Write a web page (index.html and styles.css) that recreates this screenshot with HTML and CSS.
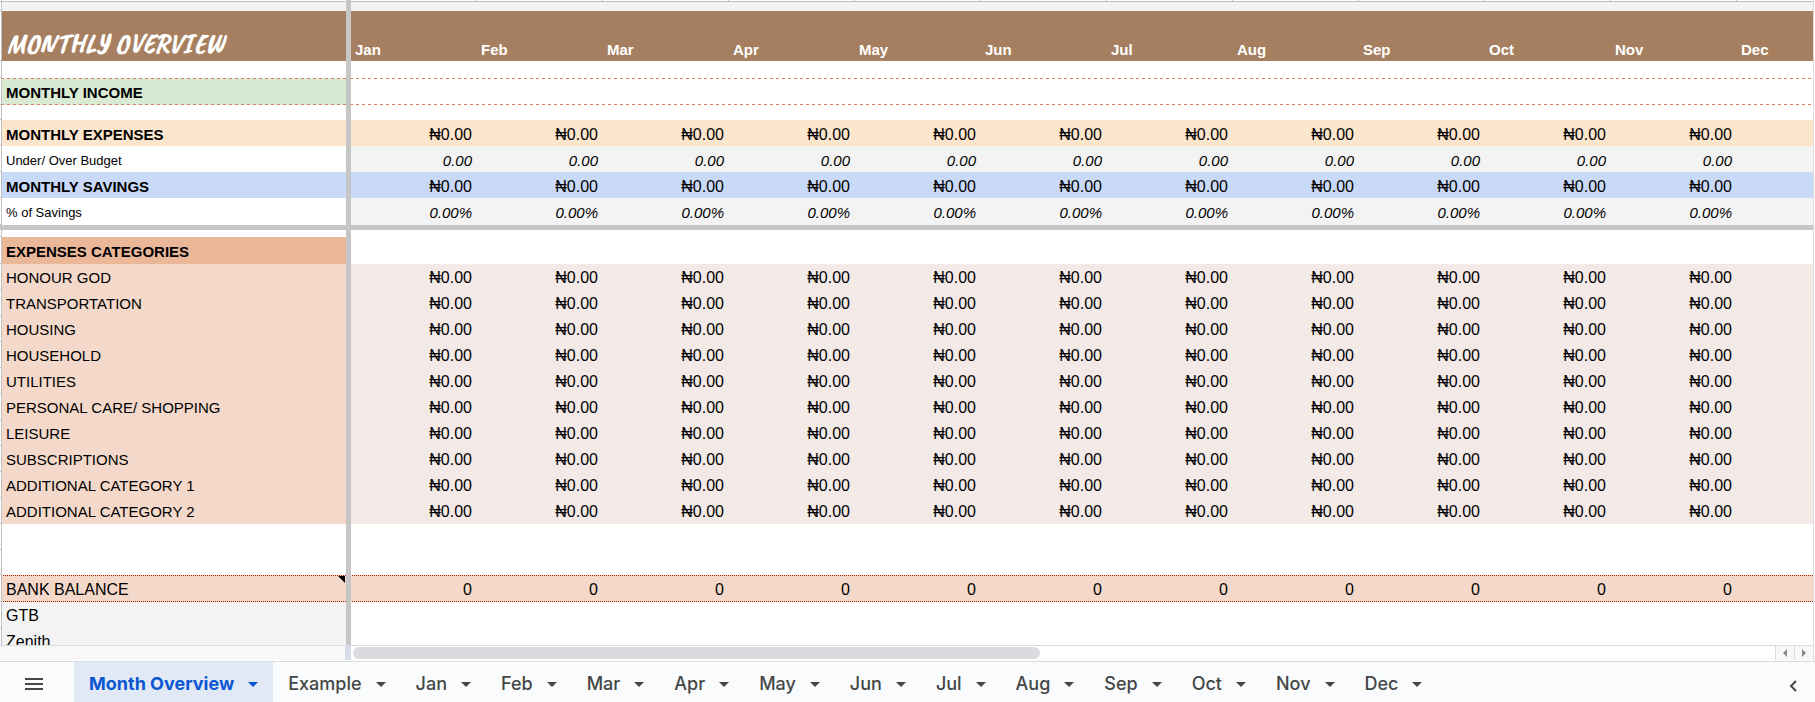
FILE: index.html
```html
<!DOCTYPE html>
<html lang="en">
<head>
    <meta charset="utf-8">
    <meta name="viewport" content="width=device-width, initial-scale=1.0">
    <title>Monthly Overview</title>
    <link rel="stylesheet" href="styles.css">
</head>
<body>

<main class="sheet">
    <table class="grid">
        <colgroup id="grid-cols">
            <col class="col-gutter">
            <col class="col-name">
            <col class="col-freeze">
        </colgroup>
        <tbody id="grid-body"></tbody>
    </table>
</main>

<div class="scrollbar">
    <div class="scroll-corner"></div>
    <div class="scroll-split"></div>
    <div class="scroll-track"><div class="scroll-thumb"></div></div>
    <button class="scroll-button" aria-label="Scroll left">
        <svg width="4" height="8" viewBox="0 0 4 8"><path d="M4 0v8L0 4z"/></svg>
    </button>
    <button class="scroll-button" aria-label="Scroll right">
        <svg width="4" height="8" viewBox="0 0 4 8"><path d="M0 0v8l4-4z"/></svg>
    </button>
</div>

<nav class="tab-bar">
    <button class="all-sheets" aria-label="All sheets">
        <svg width="18" height="12" viewBox="0 0 18 12"><path d="M0 0h18v2H0zM0 5h18v2H0zM0 10h18v2H0z"/></svg>
    </button>
    <div class="tabs" id="tabs"></div>
    <button class="side-panel" aria-label="Show side panel">
        <svg width="8" height="12" viewBox="0 0 8 12"><path d="M7 1L2 6l5 5"/></svg>
    </button>
</nav>

<script>
    const months = ['Jan', 'Feb', 'Mar', 'Apr', 'May', 'Jun', 'Jul', 'Aug', 'Sep', 'Oct', 'Nov', 'Dec'];
    const monthsFilled = 11;
    const categories = [
        'HONOUR GOD', 'TRANSPORTATION', 'HOUSING', 'HOUSEHOLD', 'UTILITIES',
        'PERSONAL CARE/ SHOPPING', 'LEISURE', 'SUBSCRIPTIONS',
        'ADDITIONAL CATEGORY 1', 'ADDITIONAL CATEGORY 2'
    ];

    // [row class, name, value for each month]
    const rows = [
        ['edge', '', ''],
        ['top', '', ''],
        ['header', 'MONTHLY OVERVIEW', null],
        ['space-large', '', ''],
        ['income', 'MONTHLY INCOME', ''],
        ['space', '', ''],
        ['expenses', 'MONTHLY EXPENSES', '₦0.00'],
        ['note', 'Under/ Over Budget', '0.00'],
        ['savings', 'MONTHLY SAVINGS', '₦0.00'],
        ['note tall', '% of Savings', '0.00%'],
        ['freeze', '', ''],
        ['space-small', '', ''],
        ['category-head', 'EXPENSES CATEGORIES', ''],
        ...categories.map(name => ['category', name, '₦0.00']),
        ['blank', '', ''],
        ['blank short', '', ''],
        ['bank', 'BANK BALANCE', '0'],
        ['account', 'GTB', ''],
        ['account', 'Zenith', '']
    ];

    const gridCols = document.getElementById('grid-cols');
    const gridBody = document.getElementById('grid-body');
    const tabs = document.getElementById('tabs');

    months.forEach(function () {
        const col = document.createElement('col');
        col.className = 'col-month';
        gridCols.appendChild(col);
    });

    rows.forEach(function ([type, name, value]) {
        const tr = document.createElement('tr');
        tr.className = type;
        const cells = months.map((month, i) => value === null
            ? `<th class="value" scope="col">${month}</th>`
            : `<td class="value">${i < monthsFilled ? value : ''}</td>`).join('');
        const nameCell = name ? `<th class="name" scope="row">${name}</th>` : '<td class="name"></td>';
        tr.innerHTML = `<td class="gutter"></td>${nameCell}<td class="freeze-bar"></td>${cells}`;
        gridBody.appendChild(tr);
    });

    ['Month Overview', 'Example', ...months].forEach(function (name, i) {
        const tab = document.createElement('button');
        tab.className = i === 0 ? 'tab active' : 'tab';
        tab.innerHTML = `${name}<svg width="10" height="5" viewBox="0 0 10 5"><path d="M0 0h10L5 5z"/></svg>`;
        tabs.appendChild(tab);
    });
</script>

</body>
</html>
```
FILE: styles.css
```css
body {
    display: flex;
    flex-direction: column;
    height: 100vh;
    margin: 0;
    overflow: hidden;
    background: #fff;
    font-family: "Liberation Sans", Arial, sans-serif;
    color: #000;
}
button {
    margin: 0;
    padding: 0;
    border: none;
    background: none;
    cursor: pointer;
}

/* Spreadsheet grid */
.sheet {
    flex: 1;
    min-height: 0;
    margin-right: 1px;
    overflow: hidden;
    border-right: 1px solid #dadce0;
}
.grid {
    width: 0;
    table-layout: fixed;
    border-spacing: 0;
}
.col-gutter {
    width: 2px;
}
.col-name {
    width: 344px;
}
.col-freeze {
    width: 5px;
}
.col-month {
    width: 126px;
}
.grid tr {
    height: 26px;
}
.grid td,
.grid th {
    box-sizing: border-box;
    padding: 0;
    font-size: 16px;
    font-weight: normal;
    line-height: 20px;
    vertical-align: bottom;
    white-space: nowrap;
}
.grid .gutter {
    border-right: 1px solid #c0c0c0;
    border-bottom: 1px solid #c0c0c0;
}
.grid .name {
    position: relative;
    padding: 0 4px 1px;
    text-align: left;
}
.grid .value {
    padding: 0 5px 1px 4px;
    text-align: right;
}
.grid .freeze-bar,
.grid .freeze td {
    border: none;
    background: #c6c6c6;
}

.grid .edge {
    height: 2px;
}
.grid .top {
    height: 9px;
}
.grid .header {
    height: 50px;
}
.grid .space-large {
    height: 17px;
}
.grid .space {
    height: 15px;
}
.grid .space-small {
    height: 7px;
}
.grid .freeze {
    height: 5px;
}
.grid .short {
    height: 25px;
}
.grid .income,
.grid .tall,
.grid .category-head,
.grid .bank {
    height: 27px;
}
.grid .income .name,
.grid .tall .name,
.grid .tall .value,
.grid .category-head .name,
.grid .category .name,
.grid .category .value,
.grid .bank .name,
.grid .bank .value,
.grid .account .name {
    padding-bottom: 2px;
}
.edge td,
.top td,
.space-large td,
.space td,
.space-small td,
.freeze td {
    padding: 0 !important;
}

.edge .name,
.edge .value {
    border-bottom: 1px solid #c0c0c0;
}
.edge .value {
    border-right: 1px solid #c0c0c0;
}
.top .name,
.top .value {
    background: #f3f3f3;
}
.header .name,
.header .value {
    background: #a67f60;
    color: #fff;
}
.grid .header .name {
    padding: 0 4px 1px;
    font-family: "Caveat Brush", "Caveat", cursive;
    font-size: 29px;
    font-style: italic;
    line-height: 32px;
}
.grid .header .value {
    font-size: 15px;
    font-weight: bold;
    text-align: left;
}
.grid .income .name,
.grid .expenses .name,
.grid .savings .name,
.grid .category-head .name {
    font-size: 15px;
    font-weight: bold;
}

/* Dashed and dotted lines run on from cell to cell */
.income .name,
.income .value {
    background-image:
        repeating-linear-gradient(to right, #e07a62 0 2px, transparent 2px 5px, #e07a62 5px 6px),
        repeating-linear-gradient(to right, #e07a62 0 2px, transparent 2px 5px, #e07a62 5px 6px);
    background-position: top, bottom;
    background-repeat: no-repeat;
    background-size: 100% 1px;
}
.bank .name,
.bank .value {
    background-color: #f4d9ca;
    background-image:
        repeating-linear-gradient(to right, transparent 0 1px, #a61c00 1px 2px),
        repeating-linear-gradient(to right, transparent 0 1px, #a61c00 1px 2px);
    background-position: top, bottom;
    background-repeat: no-repeat;
    background-size: 100% 1px;
}
.income .name {
    background-color: #d9ead3;
}
.expenses .name,
.expenses .value {
    background: #fce5cd;
}
.savings .name,
.savings .value {
    background: #c9daf8;
}
.grid .note .name {
    font-size: 13px;
}
.grid .note .value {
    background: #f3f3f3;
    font-size: 15px;
    font-style: italic;
}
.category-head .name {
    background: #eab799;
}
.grid .category .name {
    background: #f4d9ca;
    font-size: 15px;
}
.category .value {
    background: #f3eae8;
}
/* Note marker in the cell corner */
.bank .name::after {
    content: "";
    position: absolute;
    top: 1px;
    right: 1px;
    border-top: 7px solid #000;
    border-left: 7px solid transparent;
}
.account .name {
    background: #f3f3f3;
}

/* Horizontal scrollbar */
.scrollbar {
    display: flex;
    height: 14px;
    margin-right: 1px;
    padding-bottom: 1px;
    border-top: 1px solid #dadce0;
    border-right: 1px solid #dadce0;
}
.scroll-corner {
    width: 345px;
    background: #f8f8f8;
}
.scroll-split {
    width: 6px;
    background: #d9dde8;
}
.scroll-track {
    flex: 1;
    padding: 1px 2px;
}
.scroll-thumb {
    width: 48.4%;
    height: 12px;
    border-radius: 6px;
    background: #dadbdf;
}
.scroll-button {
    display: flex;
    align-items: center;
    justify-content: center;
    width: 19px;
    border-left: 1px solid #dadce0;
    background: #f8f8f8;
}
.scroll-button svg {
    fill: #8a8a8a;
}

/* Sheet tabs */
.tab-bar {
    display: flex;
    height: 40px;
    border-top: 1px solid #dadce0;
    background: #f9fbfd;
}
.all-sheets {
    width: 74px;
    padding: 6px 6px 0 0;
}
.all-sheets svg {
    fill: #444746;
}
.tabs {
    display: flex;
    flex: 1;
}
.tab {
    display: flex;
    align-items: center;
    gap: 14px;
    padding: 4px 15px 0;
    color: #444746;
    font-family: Inter, Roboto, sans-serif;
    font-size: 18px;
    font-weight: 500;
    line-height: 20px;
}
.tab svg {
    fill: currentColor;
}
.tab.active {
    background: #e1e9f7;
    color: #0b57d0;
    font-weight: 700;
}
.side-panel {
    width: 44px;
    padding-top: 10px;
}
.side-panel svg {
    fill: none;
    stroke: #444746;
    stroke-width: 2;
}
```
